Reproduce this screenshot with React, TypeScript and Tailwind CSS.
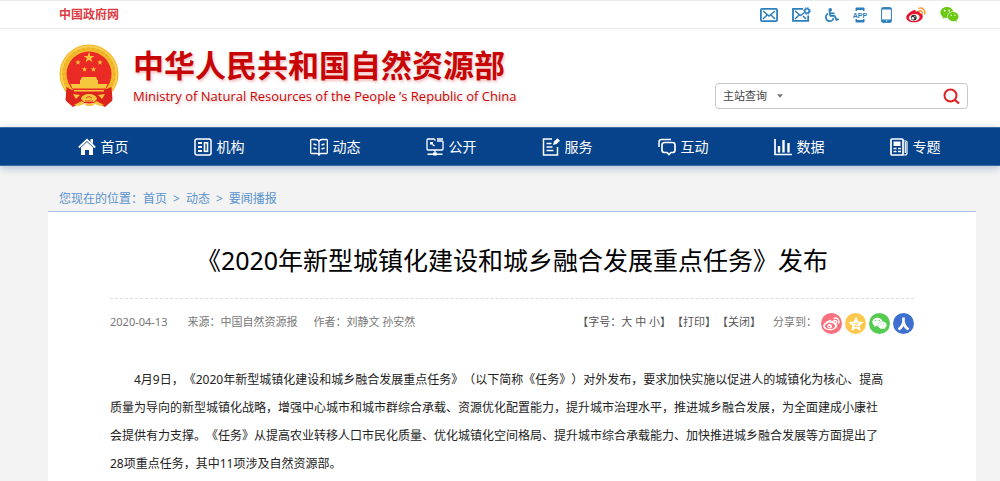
import React from 'react';
import { FaWheelchair, FaWeixin } from 'react-icons/fa';

const MailIcon = () => (
  <svg width="18" height="14" viewBox="0 0 18 14" fill="none" stroke="#2b7fbd" strokeWidth="1.800">
    <rect x="0.900" y="0.900" width="16.200" height="12.200" rx="1.200" />
    <path d="M3 3l6 5 6-5M3 11l4-4M15 11l-4-4" strokeWidth="1.500" />
  </svg>
);

const MailCogIcon = () => (
  <svg width="19" height="15" viewBox="0 0 19 15" fill="none" stroke="#2b7fbd" strokeWidth="1.800">
    <path d="M11 1.800H1v12h15.200V8.500" />
    <path d="M3 4l5.500 4.500L12 6M3 12l4-4M14 12l-3-3" strokeWidth="1.500" />
    <circle cx="15" cy="4" r="2.200" strokeWidth="1.600" />
    <circle cx="15" cy="4" r="3.400" strokeWidth="1" strokeDasharray="1.400 1.270" />
  </svg>
);

const AppIcon = () => (
  <svg width="14" height="16" viewBox="0 0 14 16">
    <path d="M2.500 4V1.500Q2.500 0.500 3.500 0.500h7q1 0 1 1V4h-1.500V3H4v1zM2.500 12v2.500q0 1 1 1h7q1 0 1-1V12h-1.500v1H4v-1z" fill="#2b7fbd" />
    <text x="7" y="10.500" textAnchor="middle" fontSize="7" fontWeight="bold" fontFamily="Liberation Sans, sans-serif" fill="#2b7fbd">APP</text>
  </svg>
);

const PhoneIcon = () => (
  <svg width="11" height="16" viewBox="0 0 11 16">
    <rect x="0.600" y="0.600" width="9.800" height="14.800" rx="1.200" fill="none" stroke="#2b7fbd" strokeWidth="1" />
    <path d="M1 1h9v1.500H1zM1 12.500h9V15H1z" fill="#2b7fbd" />
    <circle cx="5.500" cy="13.900" r="0.700" fill="#fff" />
  </svg>
);

const WeiboIcon = () => (
  <svg width="20" height="16" viewBox="0 0 20 16">
    <path d="M7.500 3.200c1.400-.6 2.500-.1 2.300 1.500 2-.8 4.300-.7 3.900 1.300 1.900.6 3.300 1.700 3.100 3.700-.3 3.300-4.500 5.600-8.700 5.600C3.900 15.300.3 13.400.2 10.400.1 7.700 4.600 4.200 7.500 3.200z" fill="#e6162d" />
    <ellipse cx="8.300" cy="10.500" rx="5.300" ry="3.500" fill="#fff" transform="rotate(-7 8.300 10.500)" />
    <circle cx="7.800" cy="10.600" r="2.900" fill="#333" />
    <circle cx="6.900" cy="11.200" r="1.200" fill="#fff" />
    <circle cx="8.900" cy="9.700" r="0.600" fill="#fff" />
    <path d="M13.200 1.200c3.400-.9 6.400 1.900 5.400 5.600M13.200 3.800c1.900-.5 3.400.9 2.900 2.700" fill="none" stroke="#ff9933" strokeWidth="1.500" strokeLinecap="round" />
  </svg>
);

const Emblem = () => (
  <svg width="60" height="64" viewBox="0 0 60 64" role="img" aria-label="国徽">
    <path d="M8 44h44l1 13-7 6-8-4H22l-8 4-7-6z" fill="#e0261f" />
    <circle cx="30" cy="30" r="29.500" fill="#f3b92b" />
    <circle cx="30" cy="30" r="26" fill="none" stroke="#d99a1c" strokeWidth="3" strokeDasharray="2 3" opacity="0.300" />
    <circle cx="30" cy="30" r="27.500" fill="none" stroke="#fbd25a" strokeWidth="1.500" />
    <circle cx="30" cy="30" r="22.500" fill="#ea2a25" />
    <path d="M7.500 43q8 6 22.500 5t22.500-5l1 13q-4 1-7 5-4-4-9-3-7 3-15 0-5-1-9 3-3-4-7-5z" fill="#dd231e" />
    <g fill="#f6c63c">
      <path d="M30 8l1.300 3.900h4.100l-3.300 2.400 1.300 3.900-3.400-2.400-3.400 2.400 1.300-3.900-3.300-2.400h4.100z" />
      <path d="M19 15.500l.7 2h2.100l-1.700 1.200.7 2-1.800-1.200-1.800 1.200.7-2-1.700-1.200h2.100z" />
      <path d="M41 15.500l.7 2h2.100l-1.700 1.200.7 2-1.800-1.200-1.800 1.200.7-2-1.700-1.200h2.100z" />
      <path d="M25.500 22.500l.7 2h2.100l-1.700 1.200.7 2-1.800-1.200-1.800 1.200.7-2-1.700-1.200h2.100z" />
      <path d="M34.500 22.500l.7 2h2.100l-1.700 1.200.7 2-1.800-1.200-1.800 1.200.7-2-1.700-1.200h2.100z" />
      <path d="M23 33h14l1.500 3h-17zM21 36h18v4H21zM11.500 40h37l-2 4.500h-33zM15 46h30v1.500H15z" />
      <path d="M22 55a8 5 0 0116 0l-3 3h-10zM14 50l7 1-4 4zM46 50l-7 1 4 4zM15 61l8-4 3 3h8l3-3 8 4-4 1-5-2-3 2h-5l-3-2-5 2z" />
    </g>
    <path d="M27 54l3-1.500 3 1.500M26 57h8" fill="none" stroke="#dd231e" strokeWidth="0.800" />
  </svg>
);

const NavSvg = ({ children }: { children: React.ReactNode }) => (
  <svg width="18" height="18" viewBox="0 0 18 18" fill="none" stroke="#fff" strokeWidth="1.500">{children}</svg>
);

const navItems = [
  {
    label: '首页',
    icon: (
      <NavSvg>
        <path d="M3 9.500l6-5.500 6 5.500V17h-4v-5H7v5H3z" fill="#fff" stroke="none" />
        <path d="M0.800 9.500L9 1.800l8.200 7.700" strokeWidth="1.800" />
        <path d="M12.500 1h2.500v5l-2.500-2.300z" fill="#fff" stroke="none" />
      </NavSvg>
    ),
  },
  {
    label: '机构',
    icon: (
      <NavSvg>
        <rect x="1" y="1" width="16" height="16" rx="2" />
        <path d="M4 5h4M4 9h4M4 13h4" strokeWidth="2" />
        <rect x="10.500" y="4.800" width="3" height="8.500" strokeWidth="1.600" />
      </NavSvg>
    ),
  },
  {
    label: '动态',
    icon: (
      <NavSvg>
        <path d="M9 3.500Q8 1.500 6 1.500H1.500q-.8 0-.8.800v12.400q0 .8.800.8H7q1.500 0 2 1.500.5-1.500 2-1.500h5.500q.8 0 .8-.8V2.300q0-.8-.8-.8H12q-2 0-3 2zM9 3.500V16" strokeWidth="1.300" />
        <path d="M3.500 6l3 1M3.500 10l3 1M14.500 6l-3 1M14.500 10l-3 1" strokeWidth="1.400" />
      </NavSvg>
    ),
  },
  {
    label: '公开',
    icon: (
      <NavSvg>
        <path d="M9.500 2.500L8 1H2q-1 0-1 1v9q0 1 1 1h14q1 0 1-1V4q0-1-1-1h-5" strokeWidth="1.300" />
        <path d="M11 1h6M1.500 16.300h15" />
        <path d="M9 12v3" strokeWidth="1.300" />
        <path d="M7 14.500h4v3H7z" fill="#fff" stroke="none" />
        <path d="M4 4h3v2.500H4z" fill="#fff" stroke="none" />
        <path d="M6.500 6.500l2 1.500" />
      </NavSvg>
    ),
  },
  {
    label: '服务',
    icon: (
      <NavSvg>
        <path d="M10 1H1.500v16h14V9" />
        <path d="M4.500 5.500h5M4.500 9h6M4.500 12.500h7" strokeWidth="1.300" />
        <path d="M11 7l1-3.500L15.500 0.200 18 2.700 14.500 6z" fill="#fff" stroke="none" />
      </NavSvg>
    ),
  },
  {
    label: '互动',
    icon: (
      <NavSvg>
        <path d="M1 9V4q0-2.500 2.500-2.500H13" />
        <path d="M6.500 4.500h8q2.500 0 2.500 2.500v5q0 2.500-2.500 2.500h-1.500l-2 2-2-2H6.500Q4 14.500 4 12V7q0-2.500 2.500-2.500z" strokeWidth="1.700" />
      </NavSvg>
    ),
  },
  {
    label: '数据',
    icon: (
      <NavSvg>
        <path d="M1 1v15.500h17" strokeWidth="1.700" />
        <path d="M5 8v6.500M9.500 2v12.500M14.500 5v9.500" strokeWidth="2.400" />
      </NavSvg>
    ),
  },
  {
    label: '专题',
    icon: (
      <NavSvg>
        <rect x="1" y="1" width="12" height="16" rx="1" strokeWidth="1.700" />
        <rect x="4" y="4" width="6" height="3.500" fill="#fff" strokeWidth="1" />
        <path d="M3.500 10.500h3M8 10.500h3M3.500 13.500h3M8 13.500h3" />
        <path d="M13 3h3q1 0 1 1v11q0 2-2 2h-3M15.300 4v11" strokeWidth="1.200" />
      </NavSvg>
    ),
  },
];

const ShareWeibo = () => (
  <svg width="17" height="14" viewBox="0 0 20 16">
    <path d="M7.500 3.200c1.400-.6 2.500-.1 2.300 1.500 2-.8 4.300-.7 3.900 1.300 1.900.6 3.300 1.700 3.100 3.700-.3 3.300-4.500 5.600-8.700 5.600C3.900 15.300.3 13.400.2 10.400.1 7.700 4.600 4.200 7.500 3.200z" fill="#fff" />
    <ellipse cx="8.300" cy="10.300" rx="5.900" ry="3.700" fill="#f9707e" />
    <circle cx="7.800" cy="10.600" r="2.700" fill="#fff" />
    <circle cx="7.200" cy="11" r="1" fill="#f9707e" />
    <path d="M13.200 1.200c3.400-.9 6.400 1.900 5.400 5.600M13.200 3.800c1.900-.5 3.400.9 2.900 2.700" fill="none" stroke="#fff" strokeWidth="1.600" strokeLinecap="round" />
  </svg>
);

const ShareStar = () => (
  <svg width="16" height="16" viewBox="0 0 15 15">
    <path d="M7.500 0.500l2.100 4.700 5.100.5-3.900 3.400 1.200 5-4.500-2.600L3 14.100l1.200-5L.3 5.700l5.100-.5z" fill="#fff" />
    <path d="M5 6.800h4.500L6 9.800h4" fill="none" stroke="#fdc84b" strokeWidth="0.800" />
  </svg>
);

const ShareRenren = () => (
  <svg width="13" height="14" viewBox="0 0 13 14" fill="none" stroke="#fff" strokeWidth="2.600">
    <path d="M6.500 0.500v5M6.500 4.500Q6 9.500 1.500 12.500M6.500 4.500Q7 9.500 11.500 12.500" />
  </svg>
);

const App: React.FC = () => {
  return (
    <div className="flex min-h-screen flex-col bg-[#f3f3f3] text-xs text-[#333] font-['Noto_Sans','Noto_Sans_CJK_SC',sans-serif] [text-spacing-trim:space-all]">
      <div className="border-y border-[#ececec] bg-white">
        <div className="flex h-[27px] items-center justify-between pr-[41px] pl-[59px]">
          <a href="#" className="font-bold text-[#dc3b43]">中国政府网</a>
          <div className="flex items-center gap-[14px]">
            <a href="#" aria-label="邮箱"><MailIcon /></a>
            <a href="#" aria-label="邮箱设置"><MailCogIcon /></a>
            <a href="#" aria-label="无障碍"><FaWheelchair size={14} color="#2b7fbd" /></a>
            <a href="#" aria-label="客户端"><AppIcon /></a>
            <a href="#" aria-label="手机版"><PhoneIcon /></a>
            <a href="#" aria-label="微博"><WeiboIcon /></a>
            <a href="#" aria-label="微信"><FaWeixin size={19} color="#6cc914" /></a>
          </div>
        </div>
      </div>

      <header className="flex justify-between bg-white pt-[15px] pr-8 pb-[18px] pl-[59px]">
        <div className="flex gap-[14px]">
          <Emblem />
          <div className="text-[#c80505] [text-shadow:1px_2px_3px_rgba(200,0,0,0.25)]">
            <div className="text-[31px] leading-[43px] font-bold whitespace-nowrap">中华人民共和国自然资源部</div>
            <div className="text-[13px] leading-[18px] whitespace-nowrap font-['Open_Sans',sans-serif]">Ministry of Natural Resources of the People ’s Republic of China</div>
          </div>
        </div>
        <form className="mt-[39px] flex h-[26px] w-[253px] items-center rounded-sm border border-[#c8c8c8] bg-white px-[7px]">
          <select aria-label="查询范围" className="w-[54px] appearance-none bg-transparent text-[11px] text-[#444] outline-none">
            <option>主站查询</option>
          </select>
          <svg width="6" height="4" viewBox="0 0 7 4"><path d="M0 0h7L3.500 4z" fill="#777" /></svg>
          <input type="text" aria-label="关键词" className="min-w-0 flex-1 bg-transparent px-2 outline-none" />
          <button type="button" aria-label="搜索">
            <svg width="17" height="17" viewBox="0 0 17 17" fill="none" stroke="#e01f1f" strokeWidth="2">
              <circle cx="7.500" cy="7.500" r="6" />
              <path d="M11.500 11.500l4.500 4" strokeWidth="2.300" />
            </svg>
          </button>
        </form>
      </header>

      <nav className="relative border-y border-[#3c6ba5] bg-[#07438a] pr-6 pl-12 shadow-[0_2px_8px_rgba(7,67,138,0.3)]">
        <ul className="grid h-[37px] grid-cols-8">
          {navItems.map((item) => (
            <li key={item.label}>
              <a href="#" className="flex h-full items-center justify-center gap-[5px] pr-1.5 text-sm text-white">
                {item.icon}
                {item.label}
              </a>
            </li>
          ))}
        </ul>
      </nav>

      <div className="flex flex-1 flex-col pr-6 pl-12">
        <div className="flex gap-1.5 pt-[23px] pb-[2px] pl-[11px] leading-5 text-[#5a92cc]">
          <span>您现在的位置：<a href="#">首页</a></span>
          <span>&gt;</span>
          <a href="#">动态</a>
          <span>&gt;</span>
          <a href="#">要闻播报</a>
        </div>

        <main className="flex-1 border-t border-[#a9c1de] bg-white px-[62px] pt-8">
          <h1 className="border-b border-dashed border-[#dcdcdc] pb-[22px] text-center text-[25px] leading-8 text-black">
            《2020年新型城镇化建设和城乡融合发展重点任务》发布
          </h1>
          <div className="flex justify-between pt-[13px] text-[11px] leading-5 text-[#777]">
            <div className="flex gap-4">
              <span className="mr-1">2020-04-13</span>
              <span>来源：中国自然资源报</span>
              <span>作者：刘静文 孙安然</span>
            </div>
            <div className="flex">
              <div className="flex gap-px text-[#555]">
                <span>
                  【字号：<button type="button">大</button> <button type="button">中</button> <button type="button">小</button>】
                </span>
                <button type="button" className="h-5">【打印】</button>
                <button type="button" className="h-5">【关闭】</button>
              </div>
              <span className="mr-1 ml-3">分享到：</span>
              <div className="flex gap-[3px] pt-px">
                <a href="#" aria-label="分享到微博" className="flex size-[21px] items-center justify-center rounded-full bg-[#f9707e]"><ShareWeibo /></a>
                <a href="#" aria-label="分享到QQ空间" className="flex size-[21px] items-center justify-center rounded-full bg-[#fdc84b]"><ShareStar /></a>
                <a href="#" aria-label="分享到微信" className="flex size-[21px] items-center justify-center rounded-full bg-[#56cb52]"><FaWeixin size={15} color="#fff" /></a>
                <a href="#" aria-label="分享到人人网" className="flex size-[21px] items-center justify-center rounded-full bg-[#3f70cf]"><ShareRenren /></a>
              </div>
            </div>
          </div>
          <p className="mt-8 max-w-[778px] indent-6 leading-7 text-[#222]">
            4月9日，《2020年新型城镇化建设和城乡融合发展重点任务》（以下简称《任务》）对外发布，要求加快实施以促进人的城镇化为核心、提高质量为导向的新型城镇化战略，增强中心城市和城市群综合承载、资源优化配置能力，提升城市治理水平，推进城乡融合发展，为全面建成小康社会提供有力支撑。《任务》从提高农业转移人口市民化质量、优化城镇化空间格局、提升城市综合承载能力、加快推进城乡融合发展等方面提出了28项重点任务，其中11项涉及自然资源部。
          </p>
        </main>
      </div>
    </div>
  );
};

export default App;
